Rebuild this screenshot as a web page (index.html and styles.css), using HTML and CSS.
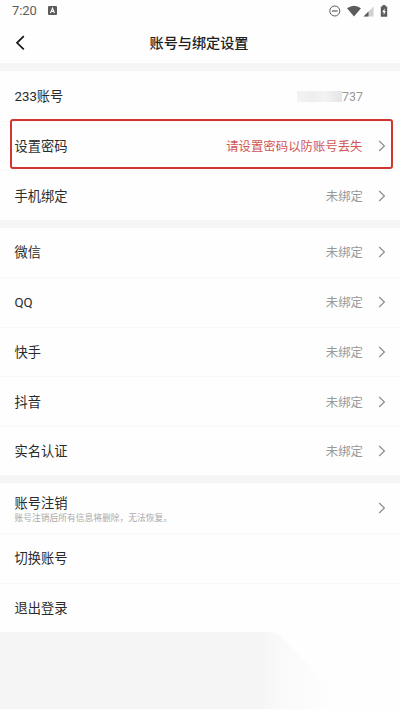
FILE: index.html
```html
<!DOCTYPE html>
<html lang="zh-CN">
<head>
<meta charset="utf-8">
<title>账号与绑定设置</title>
<link rel="stylesheet" href="styles.css">
</head>
<body>
<svg class="defs" width="0" height="0"><symbol id="chevron" viewBox="0 0 8 12"><path d="M1.2 1 6.4 6 1.2 11" fill="none" stroke="currentColor" stroke-width="1.2"/></symbol></svg>
<div class="status">
  <span class="time">7:20</span>
  <svg class="app" width="9" height="9" viewBox="0 0 9 9"><rect width="9" height="9" rx="1" fill="#5c5c5c"/><path d="M2.5 7 4.5 2.2 6.5 7M3.2 5.4h2.6" fill="none" stroke="#fff" stroke-width="1.1"/></svg>
  <svg class="indicators" width="60" height="14" viewBox="0 0 60 14">
    <circle cx="5.8" cy="7" r="5" fill="none" stroke="#5c5c5c"/>
    <path d="M3 7h5.6" stroke="#5c5c5c" stroke-width="1.2"/>
    <path d="M18 4.3Q25 -.7 32 4.3L25 12.5Z" fill="#5c5c5c"/>
    <path d="M44.5 2.5v10h-10Z" fill="#d0d0d0"/>
    <path d="M39.5 7.5v5h-5Z" fill="#5c5c5c"/>
    <path d="M51.8 2.5h1.7V1h3v1.5h1.7v10.2h-6.4Z" fill="#5c5c5c"/>
    <path d="M55.6 4.2 53.2 8.3h1.5v2.8l2.2-4.2h-1.3Z" fill="#fff"/>
  </svg>
</div>
<header class="header">
  <svg class="back" width="10" height="16" viewBox="0 0 10 16"><path d="M8.8 1.2 2 7.8l6.8 6.6" fill="none" stroke="#151515" stroke-width="1.7"/></svg>
  <h1>账号与绑定设置</h1>
</header>
<main>
  <section class="group">
    <div class="row"><span class="label latin">233账号</span><span class="value account latin"><i class="mask"></i>737</span></div>
    <div class="row highlight"><span class="label">设置密码</span><span class="value warning">请设置密码以防账号丢失</span><svg class="chevron"><use href="#chevron"/></svg></div>
    <div class="row"><span class="label">手机绑定</span><span class="value">未绑定</span><svg class="chevron"><use href="#chevron"/></svg></div>
  </section>
  <section class="group">
    <div class="row"><span class="label">微信</span><span class="value">未绑定</span><svg class="chevron"><use href="#chevron"/></svg></div>
    <div class="row"><span class="label latin">QQ</span><span class="value">未绑定</span><svg class="chevron"><use href="#chevron"/></svg></div>
    <div class="row"><span class="label">快手</span><span class="value">未绑定</span><svg class="chevron"><use href="#chevron"/></svg></div>
    <div class="row"><span class="label">抖音</span><span class="value">未绑定</span><svg class="chevron"><use href="#chevron"/></svg></div>
    <div class="row"><span class="label">实名认证</span><span class="value">未绑定</span><svg class="chevron"><use href="#chevron"/></svg></div>
  </section>
  <section class="group">
    <div class="row"><div class="label">账号注销<p class="note">账号注销后所有信息将删除，无法恢复。</p></div><svg class="chevron"><use href="#chevron"/></svg></div>
    <div class="row"><span class="label">切换账号</span></div>
    <div class="row"><span class="label">退出登录</span></div>
  </section>
</main>
<svg class="footer" width="400" height="79" viewBox="0 0 400 79">
  <defs><linearGradient id="fade" gradientUnits="userSpaceOnUse" x1="0" x2="336"><stop offset="0" stop-color="#f5f5f5"/><stop offset=".77" stop-color="#f5f5f5"/><stop offset=".83" stop-color="#f9f9f9"/><stop offset="1" stop-color="#fefefe"/></linearGradient></defs>
  <path d="M0 0H268Q276 0 282 6L326 50Q336 62 336 77H0Z" fill="url(#fade)"/>
</svg>
</body>
</html>
```

FILE: styles.css
```css
* { box-sizing: border-box; }
body {
  margin: 0;
  width: 400px;
  height: 711px;
  overflow: hidden;
  background: #fefefe;
  color: #2b2b2b;
  font-family: "Noto Sans CJK SC", sans-serif;
}
.defs { position: absolute; }
.status {
  display: flex;
  align-items: center;
  height: 22px;
  padding: 0 11px 0 12px;
}
.time {
  width: 36px;
  color: #5c5c5c;
  font: 12.9px/22px Roboto, sans-serif;
}
.app { margin-bottom: 1px; }
.indicators { margin-left: auto; }
.header {
  display: grid;
  grid-template-columns: 50px 1fr 50px;
  align-items: center;
  height: 41px;
}
.back { margin-left: 15px; }
h1 {
  margin: 0;
  padding: 0 2px 2px 0;
  color: #202020;
  font-size: 14.15px;
  font-weight: 500;
  line-height: 20px;
  text-align: center;
}
.group { border-top: 8px solid #f5f5f5; }
.group + .group { margin-top: -0.4px; }
.row {
  position: relative;
  display: flex;
  align-items: center;
  height: 49.65px;
  padding: 0 14px 0 14.5px;
}
.row + .row { border-top: 1px solid #f8f8f8; }
.label {
  margin-right: auto;
  font-size: 13.25px;
  line-height: 18px;
}
.value {
  margin-right: 15px;
  color: #999;
  font-size: 12.4px;
  line-height: 18px;
}
.latin {
  padding-top: 2px;
  font-family: Roboto, "Noto Sans CJK SC", sans-serif;
}
.account {
  display: flex;
  align-items: center;
  margin-right: 23px;
}
.mask {
  width: 45px;
  height: 11px;
  background: linear-gradient(90deg, #f3f3f3, #eee 35%, #f3f3f3 60%, #e5e5e5);
}
.warning {
  margin-right: 15.5px;
  color: #d15555;
}
.chevron {
  width: 8px;
  height: 12px;
  color: #8c8c8c;
}
.highlight { z-index: 1; }
.highlight::after {
  content: "";
  position: absolute;
  inset: -3px 7px 1px 10px;
  border: 2px solid #d13531;
  border-radius: 3px;
}
.note {
  margin: 0;
  color: #aaa;
  font-size: 8.75px;
  line-height: 11px;
}
.footer { display: block; }
```
